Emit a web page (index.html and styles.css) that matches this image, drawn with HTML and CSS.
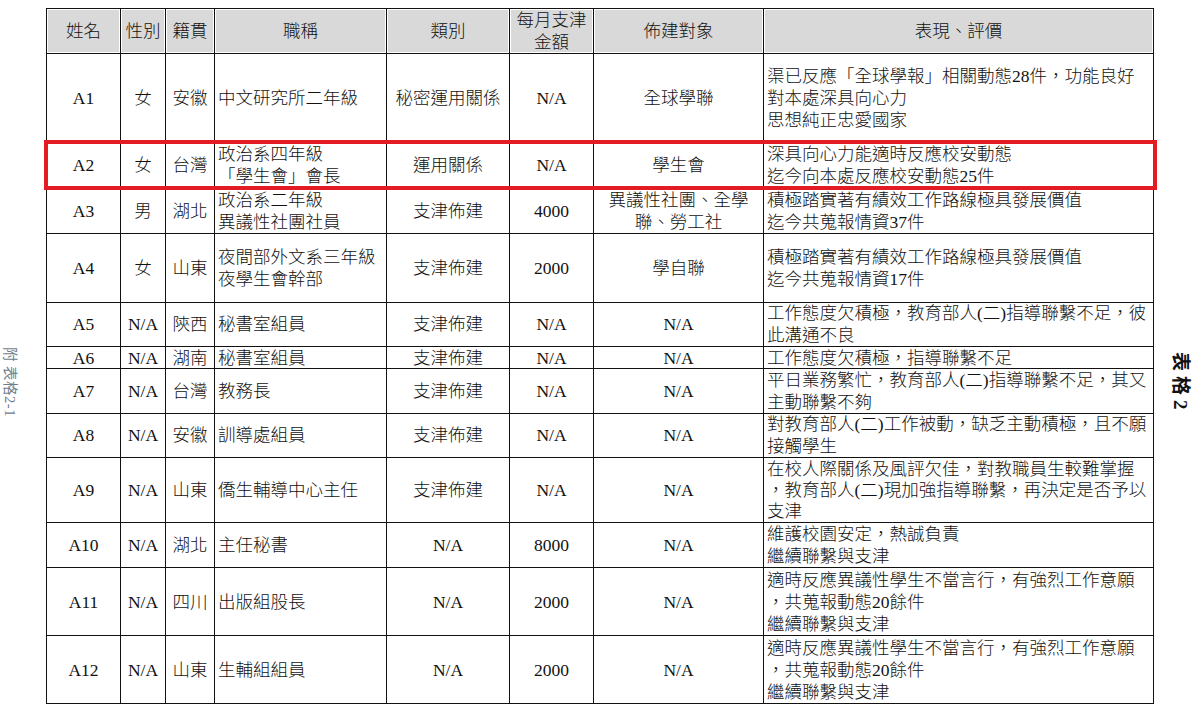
FILE: index.html
```html
<!DOCTYPE html>
<html lang="zh-Hant">
<head>
<meta charset="utf-8">
<title>表格2</title>
<link rel="stylesheet" href="styles.css">
</head>
<body>
<div class="page">
  <div class="side-left"><span class="note-left">附 表格2-1</span></div>
  <div class="sheet">
    <table class="roster">
      <colgroup>
        <col class="c-name"><col class="c-sex"><col class="c-home"><col class="c-title">
        <col class="c-type"><col class="c-pay"><col class="c-target"><col class="c-eval">
      </colgroup>
      <thead>
        <tr class="h45">
          <th>姓名</th><th>性別</th><th>籍貫</th><th>職稱</th><th>類別</th><th>每月支津<br>金額</th><th>佈建對象</th><th>表現、評價</th>
        </tr>
      </thead>
      <tbody>
        <tr class="h88">
          <td>A1</td><td>女</td><td>安徽</td><td class="l">中文研究所二年級</td><td>秘密運用關係</td><td>N/A</td><td>全球學聯</td>
          <td class="l">渠已反應「全球學報」相關動態28件，功能良好<br>對本處深具向心力<br>思想純正忠愛國家</td>
        </tr>
        <tr class="h46">
          <td>A2</td><td>女</td><td>台灣</td><td class="l">政治系四年級<br>「學生會」會長</td><td>運用關係</td><td>N/A</td><td>學生會</td>
          <td class="l">深具向心力能適時反應校安動態<br>迄今向本處反應校安動態25件</td>
        </tr>
        <tr class="h46">
          <td>A3</td><td>男</td><td>湖北</td><td class="l">政治系二年級<br>異議性社團社員</td><td>支津佈建</td><td>4000</td><td>異議性社團、全學<br>聯、勞工社</td>
          <td class="l">積極踏實著有績效工作路線極具發展價值<br>迄今共蒐報情資37件</td>
        </tr>
        <tr class="h69">
          <td>A4</td><td>女</td><td>山東</td><td class="l">夜間部外文系三年級<br>夜學生會幹部</td><td>支津佈建</td><td>2000</td><td>學自聯</td>
          <td class="l">積極踏實著有績效工作路線極具發展價值<br>迄今共蒐報情資17件</td>
        </tr>
        <tr class="h44">
          <td>A5</td><td>N/A</td><td>陝西</td><td class="l">秘書室組員</td><td>支津佈建</td><td>N/A</td><td>N/A</td>
          <td class="l">工作態度欠積極，教育部人(二)指導聯繫不足，彼<br>此溝通不良</td>
        </tr>
        <tr class="h22">
          <td>A6</td><td>N/A</td><td>湖南</td><td class="l">秘書室組員</td><td>支津佈建</td><td>N/A</td><td>N/A</td>
          <td class="l">工作態度欠積極，指導聯繫不足</td>
        </tr>
        <tr class="h45">
          <td>A7</td><td>N/A</td><td>台灣</td><td class="l">教務長</td><td>支津佈建</td><td>N/A</td><td>N/A</td>
          <td class="l">平日業務繁忙，教育部人(二)指導聯繫不足，其又<br>主動聯繫不夠</td>
        </tr>
        <tr class="h44">
          <td>A8</td><td>N/A</td><td>安徽</td><td class="l">訓導處組員</td><td>支津佈建</td><td>N/A</td><td>N/A</td>
          <td class="l">對教育部人(二)工作被動，缺乏主動積極，且不願<br>接觸學生</td>
        </tr>
        <tr class="h65">
          <td>A9</td><td>N/A</td><td>山東</td><td class="l">僑生輔導中心主任</td><td>支津佈建</td><td>N/A</td><td>N/A</td>
          <td class="l">在校人際關係及風評欠佳，對教職員生較難掌握<br>，教育部人(二)現加強指導聯繫，再決定是否予以<br>支津</td>
        </tr>
        <tr class="h45">
          <td>A10</td><td>N/A</td><td>湖北</td><td class="l">主任秘書</td><td>N/A</td><td>8000</td><td>N/A</td>
          <td class="l">維護校園安定，熱誠負責<br>繼續聯繫與支津</td>
        </tr>
        <tr class="h68">
          <td>A11</td><td>N/A</td><td>四川</td><td class="l">出版組股長</td><td>N/A</td><td>2000</td><td>N/A</td>
          <td class="l">適時反應異議性學生不當言行，有強烈工作意願<br>，共蒐報動態20餘件<br>繼續聯繫與支津</td>
        </tr>
        <tr class="h68">
          <td>A12</td><td>N/A</td><td>山東</td><td class="l">生輔組組員</td><td>N/A</td><td>2000</td><td>N/A</td>
          <td class="l">適時反應異議性學生不當言行，有強烈工作意願<br>，共蒐報動態20餘件<br>繼續聯繫與支津</td>
        </tr>
      </tbody>
    </table>
    <div class="highlight"></div>
  </div>
  <div class="side-right"><span class="note-right">表格2</span></div>
</div>
</body>
</html>
```

FILE: styles.css
```css
html, body {
  margin: 0;
  padding: 0;
  background: #ffffff;
}

.page {
  display: flex;
  align-items: flex-start;
  width: 1200px;
  height: 709px;
  overflow: hidden;
  font-family: "Liberation Serif", "Noto Sans CJK TC", serif;
  color: #111111;
}

.side-left {
  width: 46px;
  flex: 0 0 46px;
  padding-top: 347px;
  box-sizing: border-box;
  padding-left: 3px;
}

.note-left {
  display: inline-block;
  writing-mode: vertical-rl;
  text-orientation: sideways;
  font-size: 14.5px;
  line-height: 14px;
  color: #6f7d8e;
  letter-spacing: 0.5px;
}

.side-right {
  padding-left: 17px;
  padding-top: 352px;
}

.note-right {
  display: inline-block;
  writing-mode: vertical-rl;
  text-orientation: sideways;
  font-size: 19px;
  line-height: 18px;
  font-weight: bold;
  letter-spacing: 5px;
  color: #111111;
}

.sheet {
  position: relative;
  margin-top: 8px;
  flex: 0 0 1107px;
}

.roster {
  border-collapse: collapse;
  table-layout: fixed;
  width: 1107px;
  font-size: 17.5px;
  line-height: 22px;
}

.c-name { width: 74px; }
.c-sex { width: 45px; }
.c-home { width: 49px; }
.c-title { width: 172px; }
.c-type { width: 123px; }
.c-pay { width: 84px; }
.c-target { width: 170px; }
.c-eval { width: 390px; }

.roster th,
.roster td {
  border: 1px solid #111111;
  padding: 0;
  text-align: center;
  vertical-align: middle;
  white-space: nowrap;
  font-weight: 300;
}

.roster th {
  background: #d9d9d9;
  box-shadow: inset 0 0 0 1px #ffffff;
}

.roster td.l {
  text-align: left;
  padding-left: 3px;
}

.h22 { height: 22px; }
.h22 td { line-height: 20px; }
.h44 { height: 44px; }
.h44 td { line-height: 21.5px; }
.h45 { height: 45px; }
.h46 { height: 46px; }
.h65 { height: 65px; }
.h65 td { line-height: 21px; }
.h68 { height: 68px; }
.h69 { height: 69px; }
.h88 { height: 88px; }

.highlight {
  position: absolute;
  left: -2px;
  top: 132px;
  width: 1113px;
  height: 50px;
  border: 4px solid #e31b23;
  box-sizing: border-box;
  pointer-events: none;
}
```
